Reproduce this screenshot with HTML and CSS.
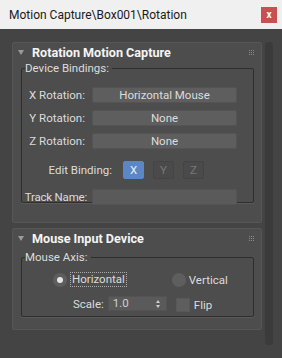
FILE: index.html
```html
<!DOCTYPE html>
<html lang="en">
<head>
    <meta charset="UTF-8">
    <title>Motion Capture</title>
    <link rel="stylesheet" href="styles.css">
</head>
<body>
<div class="titlebar">
    <span class="title">Motion Capture\Box001\Rotation</span>
    <span class="close">x</span>
</div>

<div class="content">
    <div class="rollouts">
        <div class="rollout first">
            <div class="head">
                <span class="arrow"></span>
                <span class="name">Rotation Motion Capture</span>
                <span class="grip"><i></i><i></i><i></i><i></i><i></i><i></i><i></i><i></i><i></i></span>
            </div>
            <fieldset class="group bindings">
                <legend>Device Bindings:</legend>
                <div class="row">
                    <label>X Rotation:</label>
                    <span class="btn">Horizontal Mouse</span>
                </div>
                <div class="row">
                    <label>Y Rotation:</label>
                    <span class="btn">None</span>
                </div>
                <div class="row">
                    <label>Z Rotation:</label>
                    <span class="btn">None</span>
                </div>
                <div class="row edit">
                    <label>Edit Binding:</label>
                    <span class="axis on">X</span>
                    <span class="axis">Y</span>
                    <span class="axis">Z</span>
                </div>
                <div class="row track">
                    <label>Track Name:</label>
                    <span class="field"></span>
                </div>
            </fieldset>
        </div>

        <div class="rollout second">
            <div class="head">
                <span class="arrow"></span>
                <span class="name">Mouse Input Device</span>
                <span class="grip"><i></i><i></i><i></i><i></i><i></i><i></i><i></i><i></i><i></i></span>
            </div>
            <fieldset class="group axisbox">
                <legend>Mouse Axis:</legend>
                <div class="radios">
                    <span class="radio checked"><b></b><span class="focus">Horizontal</span></span>
                    <span class="radio"><b></b><span>Vertical</span></span>
                </div>
                <div class="scalerow">
                    <label>Scale:</label>
                    <span class="spinner">1.0<span class="arrows"><i class="up"></i><i class="down"></i></span></span>
                    <span class="check"></span>
                    <span class="flip">Flip</span>
                </div>
            </fieldset>
        </div>
    </div>
    <div class="scroll"></div>
</div>
</body>
</html>
```

FILE: styles.css
```css
html, body {
    margin: 0;
    padding: 0;
}
body {
    width: 282px;
    height: 358px;
    background: #444444;
    font-family: Roboto, "Noto Sans", sans-serif;
    font-size: 11.5px;
    color: #dcdcdc;
    overflow: hidden;
}
.titlebar {
    height: 29px;
    background: #f0f0f0;
    color: #1a1a1a;
    display: flex;
    align-items: center;
    justify-content: space-between;
    padding: 0 5px 0 9px;
    font-size: 12px;
}
.close {
    width: 16px;
    height: 16px;
    background: #c75050;
    color: #fff;
    font-weight: bold;
    font-size: 10px;
    line-height: 15px;
    text-align: center;
    margin-top: 1px;
}

.content {
    display: flex;
    padding: 13px 0 0 12px;
}
.rollouts {
    width: 250px;
}
.scroll {
    width: 8px;
    height: 303px;
    margin-left: 3px;
    background: #3b3b3b;
    border-radius: 4px;
}
.rollout {
    background: #4d4d4d;
    border: 1px solid #565656;
    border-radius: 2px;
    box-sizing: border-box;
}
.rollout.first {
    height: 181px;
}
.rollout.second {
    height: 102px;
    margin-top: 5px;
}
.head {
    display: flex;
    align-items: center;
    height: 17px;
    padding-top: 1px;
}
.arrow {
    width: 0;
    height: 0;
    border-left: 3px solid transparent;
    border-right: 3px solid transparent;
    border-top: 5px solid #9a9a9a;
    margin: 0 8px 0 5px;
}
.name {
    font-weight: bold;
    font-size: 12.6px;
    color: #f4f4f4;
    flex: 1;
}
.grip {
    display: grid;
    grid-template-columns: repeat(3, 1px);
    gap: 1px;
    margin-right: 7px;
}
.grip i {
    width: 1px;
    height: 1px;
    background: #8a8a8a;
}

.group {
    margin: 0 7px 0 8px;
    padding: 0;
    border: 1px solid #2e2e2e;
    border-radius: 2px;
    box-shadow: 0 1px 0 #5a5a5a;
}
.group legend {
    padding: 0 3px 0 0;
    margin-left: 3px;
    line-height: 14px;
}
.bindings {
    height: 140px;
}
.row {
    display: flex;
    align-items: center;
    height: 16px;
    margin-top: 7px;
    white-space: nowrap;
}
.row:first-of-type {
    margin-top: 12px;
}
.row label {
    width: 63px;
    text-align: right;
    margin-right: 7px;
}
.btn, .field {
    width: 145px;
    height: 16px;
    box-sizing: border-box;
    background: #5e5e5e;
    border: 1px solid #545454;
    border-radius: 2px;
    text-align: center;
    line-height: 14px;
}
.field {
    background: #5a5a5a;
}
.row.edit {
    height: 18px;
    margin-top: 12px;
}
.row.edit label {
    width: 90px;
    margin-right: 11px;
}
.axis {
    width: 21px;
    height: 18px;
    box-sizing: border-box;
    background: #4a4a4a;
    border: 1px solid #444;
    border-radius: 2px;
    text-align: center;
    line-height: 16px;
    color: #787878;
    margin-right: 9px;
}
.axis.on {
    background: #5b87c5;
    border-color: #5b87c5;
    color: #e8eef8;
}
.row.track {
    margin-top: 10px;
}
.row.track label {
    width: 65px;
    margin-right: 5px;
    letter-spacing: -0.2px;
}

.axisbox {
    height: 65px;
    margin-top: 3px;
}
.radios {
    display: flex;
    align-items: center;
    margin-top: 8px;
    padding-left: 31px;
}
.radio {
    display: flex;
    align-items: center;
}
.radio b {
    width: 14px;
    height: 14px;
    border-radius: 50%;
    background: #5e5e5e;
    margin-right: 3px;
    position: relative;
}
.radio.checked b::after {
    content: "";
    position: absolute;
    left: 4px;
    top: 4px;
    width: 6px;
    height: 6px;
    border-radius: 50%;
    background: #e6e6e6;
}
.radio.checked {
    margin-right: 45px;
}
.focus {
    border: 1px dotted #aaa;
    padding: 0 1px;
    line-height: 13px;
}
.scalerow {
    display: flex;
    align-items: center;
    margin-top: 8px;
    padding-left: 51px;
}
.scalerow label {
    margin-right: 4px;
}
.spinner {
    width: 59px;
    height: 15px;
    box-sizing: border-box;
    background: #5a5a5a;
    border: 1px solid #535353;
    color: #d0d0d0;
    padding-left: 4px;
    line-height: 13px;
    display: flex;
    justify-content: space-between;
    align-items: center;
    margin-right: 9px;
}
.arrows {
    display: flex;
    flex-direction: column;
    gap: 2px;
    margin-right: 6px;
}
.arrows i {
    width: 0;
    height: 0;
    border-left: 2px solid transparent;
    border-right: 2px solid transparent;
}
.arrows .up {
    border-bottom: 3px solid #cfcfcf;
}
.arrows .down {
    border-top: 3px solid #cfcfcf;
}
.check {
    width: 12px;
    height: 12px;
    background: #5e5e5e;
    border: 1px solid #585858;
    margin: 3px 4px 0 0;
}
.flip {
    margin-top: 3px;
}
```
